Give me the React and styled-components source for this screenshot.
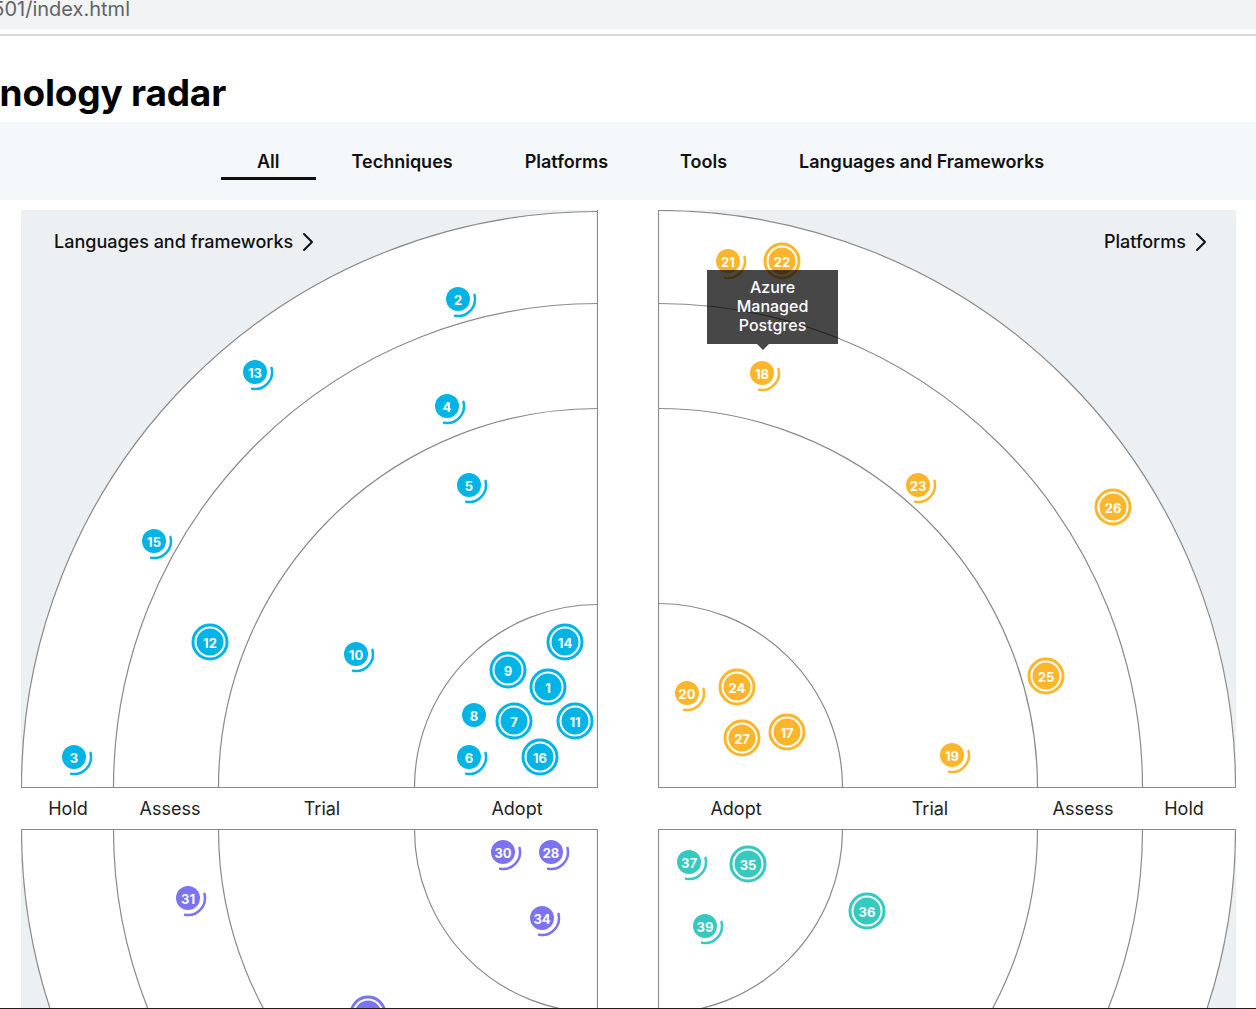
import React from 'react';
import styled, { createGlobalStyle } from 'styled-components';

const GlobalStyle = createGlobalStyle`
  html, body {
    margin: 0;
    padding: 0;
    background: #fff;
  }
  body {
    font-family: Inter, "Noto Sans", sans-serif;
    color: #111;
  }
`;

const Page = styled.div`
  height: 1009px;
  overflow: hidden;
  box-sizing: border-box;
  border-bottom: 1px solid #1d1d1d;
`;

const AddressBar = styled.div`
  height: 29px;
  background: #f1f3f4;
  overflow: hidden;
`;

const Url = styled.div`
  width: 130px;
  display: flex;
  justify-content: flex-end;
  white-space: nowrap;
  margin-top: -3px;
  font-size: 20px;
  line-height: 24px;
  color: #5f6368;
`;

const Divider = styled.div`
  margin-top: 5px;
  height: 2px;
  background: #dadada;
`;

const TitleRow = styled.div`
  padding: 34px 0 6px;
`;

const Title = styled.h1`
  margin: 0;
  width: 226px;
  display: flex;
  justify-content: flex-end;
  white-space: nowrap;
  font-size: 37px;
  line-height: 46px;
  font-weight: 700;
  letter-spacing: -0.2px;
  color: #000;
`;

const TabBar = styled.nav`
  display: flex;
  background: #f5f8fb;
  padding: 28px 0 20px 221px;
`;

const Tab = styled.div`
  padding: 1px 36px 4px;
  font-size: 18px;
  line-height: 22px;
  font-weight: 600;
  color: #111;
  white-space: nowrap;
  border-bottom: 3px solid ${p => (p.$active ? '#111' : 'transparent')};
`;

const Board = styled.div`
  display: grid;
  grid-template-columns: 577px 578px;
  grid-template-rows: 578px 41px 578px;
  column-gap: 60px;
  padding: 10px 0 0 21px;
`;

const Panel = styled.div`
  position: relative;
`;

const Chart = styled.svg`
  display: block;
`;

const PanelTitle = styled.div`
  position: absolute;
  top: 21px;
  ${p => (p.$right ? 'right: 29px;' : 'left: 33px;')}
  display: flex;
  align-items: center;
  gap: 9px;
  font-size: 18px;
  line-height: 22px;
  font-weight: 500;
  color: #111;
  white-space: nowrap;
`;

const Tooltip = styled.div`
  position: absolute;
  left: 49px;
  top: 60px;
  width: 131px;
  box-sizing: border-box;
  padding: 8px 14px 9px;
  background: rgba(0, 0, 0, 0.72);
  color: #fff;
  font-size: 16px;
  line-height: 19px;
  font-weight: 500;
  text-align: center;

  &::after {
    content: '';
    position: absolute;
    left: 50px;
    bottom: -6px;
    border-left: 6px solid transparent;
    border-right: 6px solid transparent;
    border-top: 6px solid rgba(0, 0, 0, 0.72);
  }
`;

const LabelRow = styled.div`
  display: flex;
  align-items: center;
`;

const RingLabel = styled.div`
  flex-shrink: 0;
  width: ${p => p.$w}px;
  text-align: center;
  font-size: 18px;
  line-height: 22px;
  color: #222;
`;

const BlipNum = styled.text`
  font-family: Inter, "Noto Sans", sans-serif;
  font-size: 13px;
  font-weight: 700;
  fill: #fff;
`;

const BLUE = '#00b4e6';
const YELLOW = '#fdb62b';
const PURPLE = '#7b73f0';
const TEAL = '#36c9bf';

const arcPath = (() => {
  const r = 17;
  const a0 = (-14 * Math.PI) / 180;
  const a1 = (100 * Math.PI) / 180;
  const x0 = r * Math.cos(a0), y0 = r * Math.sin(a0);
  const x1 = r * Math.cos(a1), y1 = r * Math.sin(a1);
  return `M ${x0.toFixed(2)} ${y0.toFixed(2)} A ${r} ${r} 0 0 1 ${x1.toFixed(2)} ${y1.toFixed(2)}`;
})();

const Blip = ({ x, y, n, t, color }) => (
  <g transform={`translate(${x} ${y})`}>
    {t === 'ring' && <circle r="17" fill="none" stroke={color} strokeWidth="3" />}
    {t === 'arc' && <path d={arcPath} fill="none" stroke={color} strokeWidth="2.5" strokeLinecap="round" />}
    <circle r={t === 'ring' ? 13.5 : 12} fill={color} />
    <BlipNum x="0" y="0.5" textAnchor="middle" dominantBaseline="central">{n}</BlipNum>
  </g>
);

const Quadrant = ({ w, cx, cy, radii, blips, color }) => (
  <Chart width={w} height={578} viewBox={`0 0 ${w} 578`}>
    <rect width={w} height={578} fill="#edf0f3" />
    {radii.map(r => (
      <circle key={r} cx={cx} cy={cy} r={r} fill="#fff" stroke="#8a8a8a" strokeWidth="1.2" />
    ))}
    <line x1={cx} y1="0" x2={cx} y2="578" stroke="#8a8a8a" strokeWidth="1.2" />
    <line x1="0" y1={cy} x2={w} y2={cy} stroke="#8a8a8a" strokeWidth="1.2" />
    {blips.map(b => <Blip key={b.n} {...b} color={color} />)}
  </Chart>
);

const Chevron = () => (
  <svg width="12" height="20" viewBox="0 0 12 20">
    <path d="M2 2 L10 10 L2 18" fill="none" stroke="#111" strokeWidth="2" strokeLinecap="round" strokeLinejoin="round" />
  </svg>
);

const langBlips = [
  { n: 2, x: 437, y: 89, t: 'arc' },
  { n: 13, x: 234, y: 162, t: 'arc' },
  { n: 4, x: 426, y: 196, t: 'arc' },
  { n: 5, x: 448, y: 275, t: 'arc' },
  { n: 15, x: 133, y: 331, t: 'arc' },
  { n: 12, x: 189, y: 432, t: 'ring' },
  { n: 10, x: 335, y: 444, t: 'arc' },
  { n: 3, x: 53, y: 547, t: 'arc' },
  { n: 14, x: 544, y: 432, t: 'ring' },
  { n: 9, x: 487, y: 460, t: 'ring' },
  { n: 1, x: 527, y: 477, t: 'ring' },
  { n: 8, x: 453, y: 505, t: 'plain' },
  { n: 7, x: 493, y: 511, t: 'ring' },
  { n: 11, x: 554, y: 511, t: 'ring' },
  { n: 6, x: 448, y: 547, t: 'arc' },
  { n: 16, x: 519, y: 547, t: 'ring' },
];

const platformBlips = [
  { n: 21, x: 70, y: 51, t: 'arc' },
  { n: 22, x: 124, y: 51, t: 'ring' },
  { n: 18, x: 104, y: 163, t: 'arc' },
  { n: 23, x: 260, y: 275, t: 'arc' },
  { n: 26, x: 455, y: 297, t: 'ring' },
  { n: 25, x: 388, y: 466, t: 'ring' },
  { n: 20, x: 29, y: 483, t: 'arc' },
  { n: 24, x: 79, y: 477, t: 'ring' },
  { n: 27, x: 84, y: 528, t: 'ring' },
  { n: 17, x: 129, y: 522, t: 'ring' },
  { n: 19, x: 294, y: 545, t: 'arc' },
];

const toolBlips = [
  { n: 30, x: 482, y: 23, t: 'arc' },
  { n: 28, x: 530, y: 23, t: 'arc' },
  { n: 34, x: 521, y: 89, t: 'arc' },
  { n: 31, x: 167, y: 69, t: 'arc' },
  { n: 29, x: 347, y: 185, t: 'ring' },
];

const techniqueBlips = [
  { n: 37, x: 31, y: 33, t: 'arc' },
  { n: 35, x: 90, y: 35, t: 'ring' },
  { n: 39, x: 47, y: 97, t: 'arc' },
  { n: 36, x: 209, y: 82, t: 'ring' },
];

const LEFT_RADII = [576, 484, 379, 183];
const RIGHT_RADII = [577, 484, 379, 184];

const tabs = ['All', 'Techniques', 'Platforms', 'Tools', 'Languages and Frameworks'];

const App = () => (
  <Page>
    <GlobalStyle />
    <AddressBar>
      <Url>127.0.0.1:5501/index.html</Url>
    </AddressBar>
    <Divider />
    <TitleRow>
      <Title>Technology radar</Title>
    </TitleRow>
    <TabBar>
      {tabs.map((t, i) => (
        <Tab key={t} $active={i === 0}>{t}</Tab>
      ))}
    </TabBar>
    <Board>
      <Panel>
        <Quadrant w={577} cx={576.5} cy={577.5} radii={LEFT_RADII} blips={langBlips} color={BLUE} />
        <PanelTitle>
          Languages and frameworks <Chevron />
        </PanelTitle>
      </Panel>
      <Panel>
        <Quadrant w={578} cx={0.5} cy={577.5} radii={RIGHT_RADII} blips={platformBlips} color={YELLOW} />
        <PanelTitle $right>
          Platforms <Chevron />
        </PanelTitle>
        <Tooltip>Azure Managed Postgres</Tooltip>
      </Panel>
      <LabelRow>
        <RingLabel $w={94}>Hold</RingLabel>
        <RingLabel $w={110}>Assess</RingLabel>
        <RingLabel $w={194}>Trial</RingLabel>
        <RingLabel $w={196}>Adopt</RingLabel>
      </LabelRow>
      <LabelRow>
        <RingLabel $w={156}>Adopt</RingLabel>
        <RingLabel $w={232}>Trial</RingLabel>
        <RingLabel $w={74}>Assess</RingLabel>
        <RingLabel $w={128}>Hold</RingLabel>
      </LabelRow>
      <Panel>
        <Quadrant w={577} cx={576.5} cy={0.5} radii={LEFT_RADII} blips={toolBlips} color={PURPLE} />
      </Panel>
      <Panel>
        <Quadrant w={578} cx={0.5} cy={0.5} radii={RIGHT_RADII} blips={techniqueBlips} color={TEAL} />
      </Panel>
    </Board>
  </Page>
);

export default App;
